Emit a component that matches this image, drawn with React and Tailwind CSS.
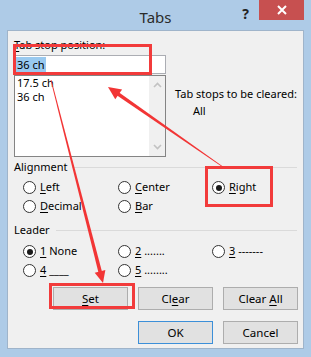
import React from "react";

const FONT = "font-['Noto_Sans',sans-serif]";

function Radio({ checked }) {
  return (
    <span className="w-[13px] h-[13px] rounded-full border border-[#333] bg-white flex items-center justify-center shrink-0">
      {checked && <span className="w-[6px] h-[6px] rounded-full bg-[#1a1a1a]" />}
    </span>
  );
}

function Option({ checked, k, rest }) {
  return (
    <div className="flex items-center gap-[4px] h-[19px]">
      <Radio checked={checked} />
      <span className="whitespace-pre">
        <span className="underline underline-offset-2">{k}</span>
        {rest}
      </span>
    </div>
  );
}

function Btn({ children, primary }) {
  return (
    <button
      className={`w-[75px] h-[23px] bg-[#e1e1e1] border ${
        primary ? "border-[#3c8fd8]" : "border-[#adadad]"
      } text-[11.5px] text-black whitespace-nowrap`}
    >
      {children}
    </button>
  );
}

function taper(x1, y1, x2, y2, w1, w2) {
  const dx = x2 - x1;
  const dy = y2 - y1;
  const len = Math.hypot(dx, dy);
  const nx = -dy / len;
  const ny = dx / len;
  return [
    [x1 + (nx * w1) / 2, y1 + (ny * w1) / 2],
    [x2 + (nx * w2) / 2, y2 + (ny * w2) / 2],
    [x2 - (nx * w2) / 2, y2 - (ny * w2) / 2],
    [x1 - (nx * w1) / 2, y1 - (ny * w1) / 2],
  ]
    .map((p) => p.join(","))
    .join(" ");
}

function Arrow({ tail, tip, head = 13, half = 6 }) {
  const [tx, ty] = tail;
  const [px, py] = tip;
  const len = Math.hypot(px - tx, py - ty);
  const ux = (px - tx) / len;
  const uy = (py - ty) / len;
  const bx = px - ux * head;
  const by = py - uy * head;
  const nx = -uy;
  const ny = ux;
  const headPts = [
    [px, py],
    [bx + nx * half, by + ny * half],
    [bx - nx * half, by - ny * half],
  ]
    .map((p) => p.join(","))
    .join(" ");
  return (
    <>
      <polygon points={taper(tx, ty, bx + ux * 2, by + uy * 2, 0.9, 3.6)} fill="#f23535" />
      <polygon points={headPts} fill="#f23535" />
    </>
  );
}

export default function App() {
  return (
    <div className={`relative w-[311px] h-[357px] bg-[#aecbe7] text-[11px] text-black ${FONT}`}>
      {/* Title bar */}
      <div className="flex h-[30px]">
        <div className="w-[79px]" />
        <div className="flex-1 flex justify-center pt-[6px] text-[15px] text-[#2b2b2b]">Tabs</div>
        <div className="w-[79px] flex items-start">
          <span className="w-[27px] pt-[3px] text-center font-bold text-[14px] text-[#222]">?</span>
          <span className="w-[45px] h-[20px] bg-[#c75050] flex items-center justify-center">
            <svg width="10" height="10" viewBox="0 0 10 10">
              <path d="M1 1L9 9M9 1L1 9" stroke="white" strokeWidth="2" />
            </svg>
          </span>
        </div>
      </div>

      {/* Client area */}
      <div className="mx-[7px] h-[319px] border border-[#9fb4ca] bg-[#f0f0f0] whitespace-nowrap">
        <div className="flex pl-[6px] pt-[6px]">
          <div className="w-[152px]">
            <div className="leading-[16px]">
              <span className="underline underline-offset-2">T</span>ab stop position:
            </div>
            <div className="mt-[2px] h-[19px] bg-white border border-[#abadb3] flex items-center pl-[1px]">
              <span className="bg-[#99c9ef] px-[1px] leading-[15px]">36 ch</span>
            </div>
            <div className="mt-[1px] h-[82px] bg-white border border-[#848484] flex">
              <div className="flex-1 pl-[2px] leading-[14px]">
                <div>17.5 ch</div>
                <div>36 ch</div>
              </div>
              <div className="w-[16px] bg-[#f0f0f0] flex flex-col items-center justify-between py-[6px]">
                <svg width="9" height="6" viewBox="0 0 9 6">
                  <path d="M1 5L4.5 1.5L8 5" fill="none" stroke="#c2c2c2" strokeWidth="1.6" />
                </svg>
                <svg width="9" height="6" viewBox="0 0 9 6">
                  <path d="M1 1L4.5 4.5L8 1" fill="none" stroke="#c2c2c2" strokeWidth="1.6" />
                </svg>
              </div>
            </div>
          </div>
          <div className="ml-[9px] mt-[48px] leading-[17px]">
            <div>Tab stops to be cleared:</div>
            <div className="pl-[18px]">All</div>
          </div>
        </div>

        {/* Alignment */}
        <div className="flex items-center pl-[6px] pr-[6px] mt-[2px] leading-[16px]">
          <span>Alignment</span>
          <span className="flex-1 h-px bg-[#dadada] ml-[4px]" />
        </div>
        <div className="grid grid-cols-[95px_94px_1fr] pl-[15px] mt-[3px]">
          <Option k="L" rest="eft" />
          <Option k="C" rest="enter" />
          <Option checked k="R" rest="ight" />
          <Option k="D" rest="ecimal" />
          <Option k="B" rest="ar" />
        </div>

        {/* Leader */}
        <div className="flex items-center pl-[6px] pr-[6px] mt-[6px] leading-[16px]">
          <span>Leader</span>
          <span className="flex-1 h-px bg-[#dadada] ml-[6px]" />
        </div>
        <div className="grid grid-cols-[95px_94px_1fr] pl-[15px] mt-[4px]">
          <Option checked k="1" rest=" None" />
          <Option k="2" rest=" ......." />
          <Option k="3" rest=" -------" />
          <Option k="4" rest=" ____" />
          <Option k="5" rest=" ........" />
        </div>

        {/* Buttons */}
        <div className="flex gap-[10px] pl-[45px] mt-[7px]">
          <Btn>
            <span className="underline underline-offset-2">S</span>et
          </Btn>
          <Btn>
            Cl<span className="underline underline-offset-2">e</span>ar
          </Btn>
          <Btn>
            Clear <span className="underline underline-offset-2">A</span>ll
          </Btn>
        </div>
        <div className="flex gap-[10px] pl-[130px] mt-[11px]">
          <Btn primary>OK</Btn>
          <Btn>Cancel</Btn>
        </div>
      </div>

      {/* Annotations */}
      <svg className="absolute inset-0 pointer-events-none" width="311" height="357">
        <rect x="14.5" y="45.5" width="136" height="28" fill="none" stroke="#f23b3b" strokeWidth="3" />
        <rect x="206.5" y="167.5" width="65" height="38" fill="none" stroke="#f23b3b" strokeWidth="3" />
        <rect x="50.5" y="284.5" width="83" height="23" fill="none" stroke="#f23b3b" strokeWidth="3" />
        <Arrow tail={[223, 167]} tip={[108, 87]} head={13} half={6} />
        <Arrow tail={[51, 80]} tip={[103, 283]} head={12} half={5.5} />
      </svg>
    </div>
  );
}
